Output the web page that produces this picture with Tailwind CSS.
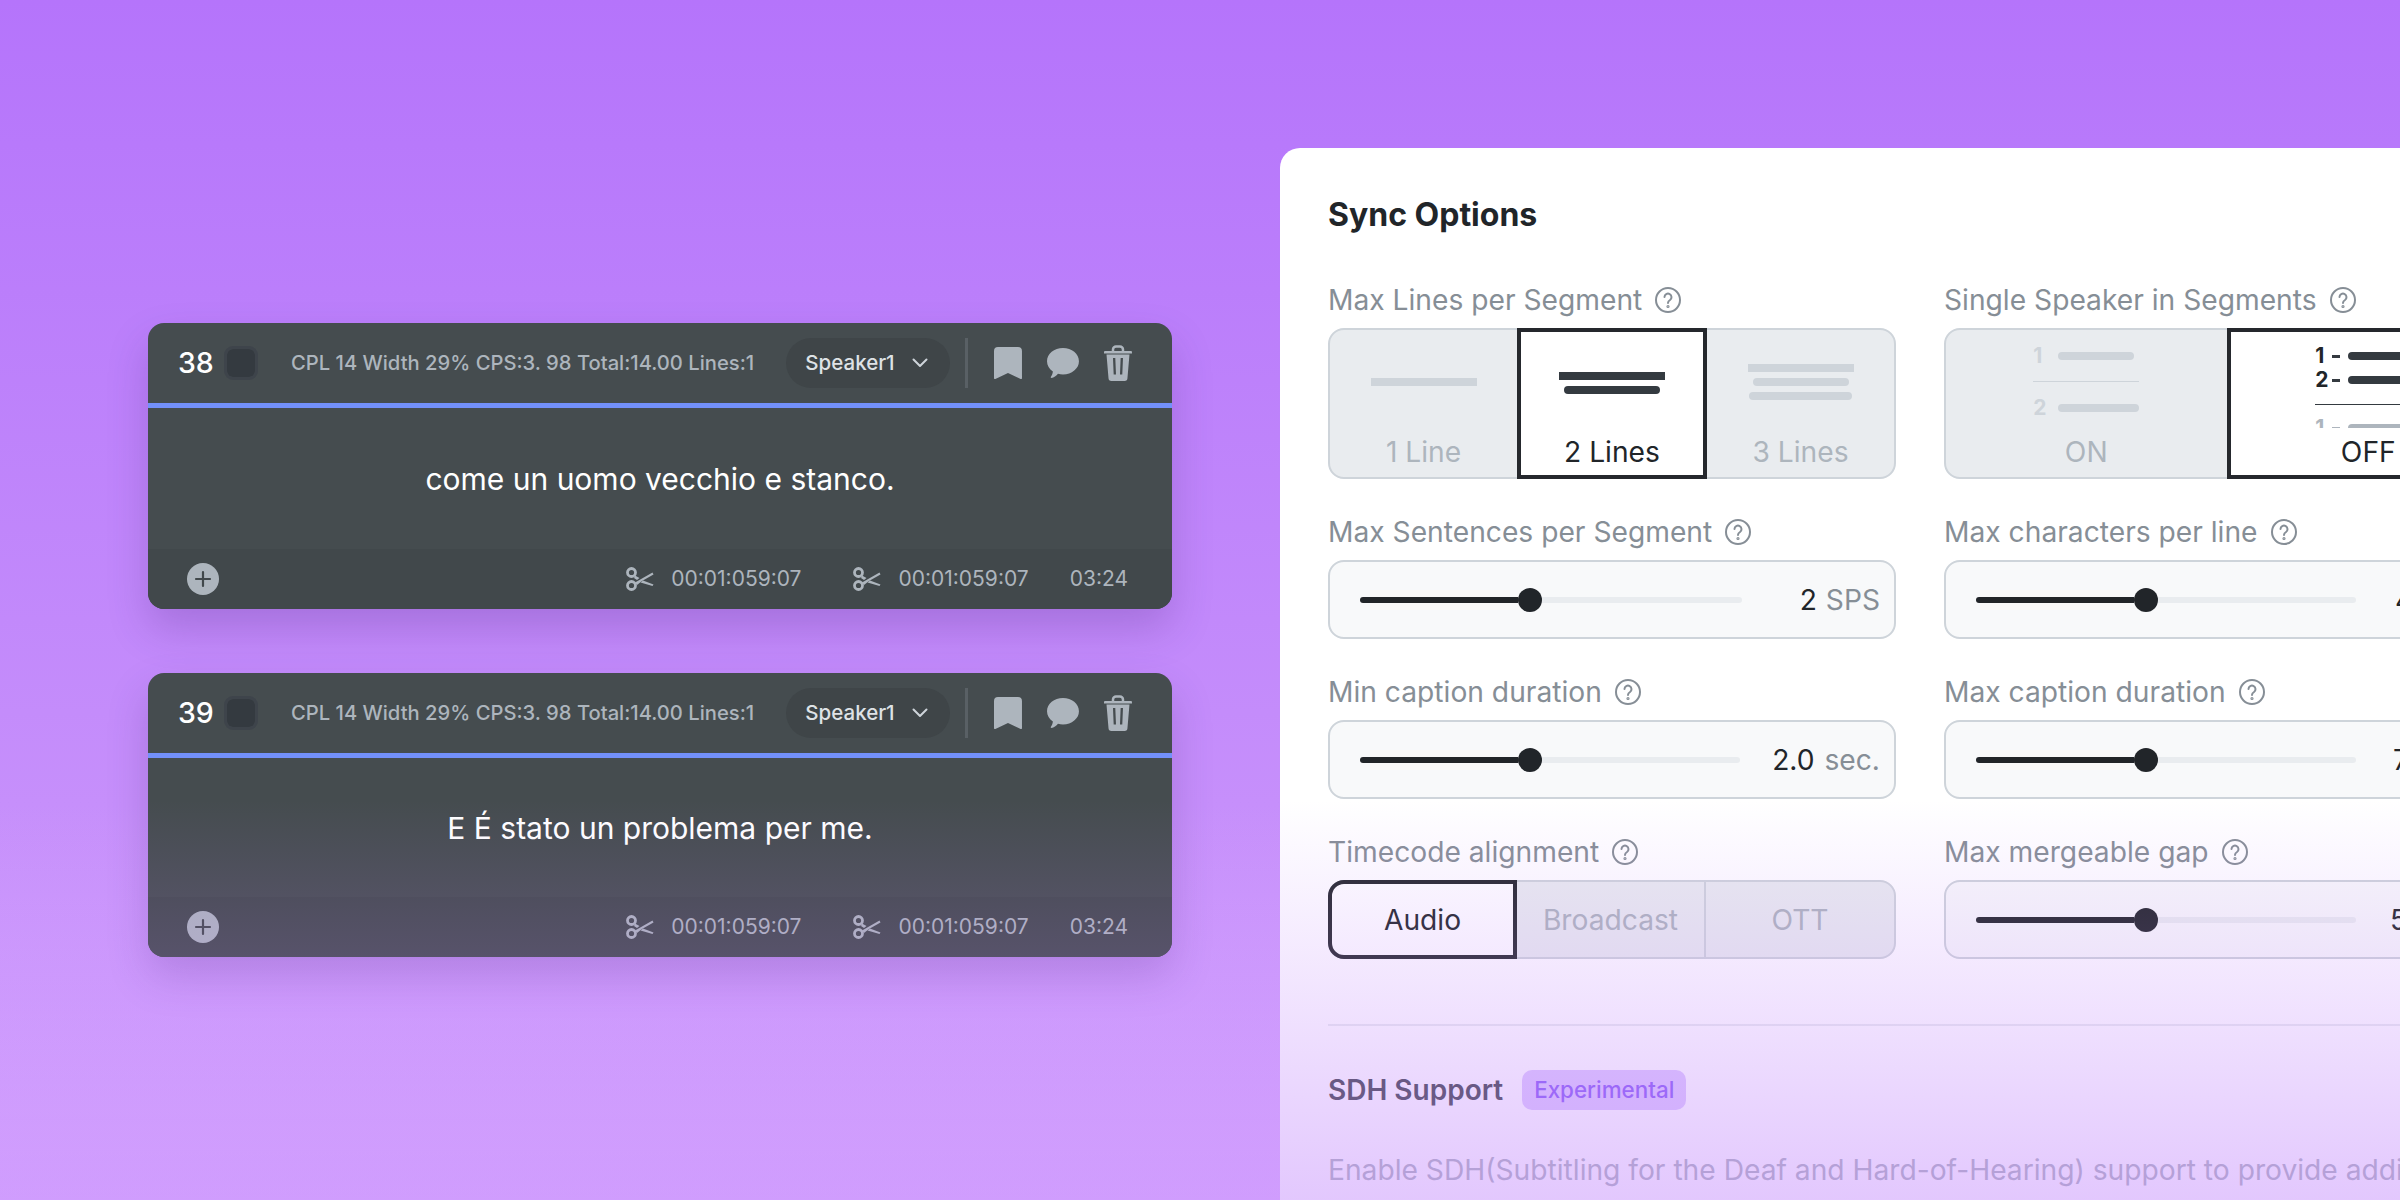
<!DOCTYPE html>
<html>
<head>
<meta charset="utf-8">
<script src="https://cdn.jsdelivr.net/npm/@tailwindcss/browser@4"></script>
</head>
<body class="m-0">
<div class="relative flex w-[2400px] h-[1200px] overflow-hidden bg-linear-to-b from-[#b574fb] via-[#c68ffb] via-67% to-[#ddb1ff] font-['Inter','Noto_Sans',sans-serif]">

  <!-- left column -->
  <div class="ml-[148px] mt-[323px] w-[1024px] shrink-0 flex flex-col gap-[64px]">
    <!-- card 38 -->
    <div class="w-[1024px] rounded-2xl overflow-hidden bg-[#454c4f] shadow-[0_20px_40px_rgba(70,30,120,0.22)]">
      <div class="h-[80px] flex items-center pl-[30px] pr-[40px]">
        <span class="w-[34px] text-[28.5px] leading-[36px] font-medium text-white">38</span>
        <span class="ml-[15px] w-[28px] h-[28px] rounded-md bg-[#343a40] outline-[3px] outline-[#3e444b]"></span>
        <span class="ml-[36px] w-[472px] whitespace-nowrap text-[20.2px] leading-[28px] font-medium text-[#adb5bd]">CPL 14 Width 29% CPS:3. 98 Total:14.00 Lines:1</span>
        <span class="ml-[24px] w-[164px] h-[50px] rounded-full bg-[#3f4548] flex items-center pl-[19px]">
          <span class="text-[20.5px] font-medium leading-[28px] text-[#dee2e6]">Speaker1</span>
          <svg class="ml-[17px]" width="16" height="10" viewBox="0 0 16 10" fill="none" stroke="#ced4da" stroke-width="2" stroke-linecap="round" stroke-linejoin="round"><path d="M1.5 1.5 8 8l6.5-6.5"/></svg>
        </span>
        <span class="ml-[15px] w-[3px] h-[50px] bg-[#596065]"></span>
        <svg class="ml-[26px]" width="28" height="32" viewBox="0 0 28 32" fill="#adb5bd"><path d="M4 0h20a4 4 0 0 1 4 4v27a1 1 0 0 1-1.400.900L14 26 1.400 31.900A1 1 0 0 1 0 31V4a4 4 0 0 1 4-4z"/></svg>
        <svg class="ml-[25px]" width="32" height="30" viewBox="0 0 32 30" fill="#adb5bd"><path d="M16 0c8.800 0 16 5.900 16 13.200S24.800 26.400 16 26.400c-1.800 0-3.500-.200-5-.7-1.600 1.900-4.200 4-6.500 4.200-.7 0-1-.6-.6-1.200.9-1.300 1.800-3.100 2-5.300C2.300 21 0 17.300 0 13.200 0 5.900 7.200 0 16 0z"/></svg>
        <svg class="ml-[25px]" width="28" height="36" viewBox="0 0 28 36" fill="none"><path d="M9 6V4.500A3 3 0 0 1 12 1.500h4a3 3 0 0 1 3 3V6" stroke="#adb5bd" stroke-width="2.500"/><path d="M1 6h26a1 1 0 0 1 1 1v1.500H0V7a1 1 0 0 1 1-1z" fill="#adb5bd"/><path fill-rule="evenodd" d="M2.500 9.500h23l-2 23.500a3 3 0 0 1-3 3h-13a3 3 0 0 1-3-3zM9 13l.7 16.500h2.300L11.300 13zm7.700 0L16 29.500h2.300L19 13z" fill="#adb5bd"/></svg>
      </div>
      <div class="h-[5px] bg-[#7390fa]"></div>
      <div class="h-[141px] flex items-center justify-center text-[30px] leading-[40px] text-white">come un uomo vecchio e stanco.</div>
      <div class="h-[60px] bg-[#41484b] flex items-center pl-[39px] pr-[44px]">
        <span class="w-[32px] h-[32px] rounded-full bg-[#adb5bd] flex items-center justify-center">
          <svg width="18" height="18" viewBox="0 0 18 18" stroke="#41484b" stroke-width="2.200" stroke-linecap="round"><path d="M9 2v14M2 9h14"/></svg>
        </span>
        <svg class="ml-auto" width="28" height="24" viewBox="0 0 28 24" fill="#adb5bd"><circle cx="5.500" cy="5.500" r="4" fill="none" stroke="#adb5bd" stroke-width="2.800"/><circle cx="5.500" cy="18.500" r="4" fill="none" stroke="#adb5bd" stroke-width="2.800"/><path d="M9 15.500 26.500 5.500l1 2L16 14l-5 4z"/><path d="M9 8.500 13.500 11 11 13 8 11zM17 13.500l10.500 4-1 1.500-12-3.500z"/></svg>
        <span class="ml-[17px] text-[21px] leading-[28px] text-[#adb5bd]">00:01:059:07</span>
        <svg class="ml-[52px]" width="28" height="24" viewBox="0 0 28 24" fill="#adb5bd"><circle cx="5.500" cy="5.500" r="4" fill="none" stroke="#adb5bd" stroke-width="2.800"/><circle cx="5.500" cy="18.500" r="4" fill="none" stroke="#adb5bd" stroke-width="2.800"/><path d="M9 15.500 26.500 5.500l1 2L16 14l-5 4z"/><path d="M9 8.500 13.500 11 11 13 8 11zM17 13.500l10.500 4-1 1.500-12-3.500z"/></svg>
        <span class="ml-[17px] text-[21px] leading-[28px] text-[#adb5bd]">00:01:059:07</span>
        <span class="ml-[41px] text-[21px] leading-[28px] text-[#adb5bd]">03:24</span>
      </div>
    </div>
    <!-- card 39 -->
    <div class="w-[1024px] rounded-2xl overflow-hidden bg-[#454c4f] shadow-[0_20px_40px_rgba(70,30,120,0.22)]">
      <div class="h-[80px] flex items-center pl-[30px] pr-[40px]">
        <span class="w-[34px] text-[28.5px] leading-[36px] font-medium text-white">39</span>
        <span class="ml-[15px] w-[28px] h-[28px] rounded-md bg-[#343a40] outline-[3px] outline-[#3e444b]"></span>
        <span class="ml-[36px] w-[472px] whitespace-nowrap text-[20.2px] leading-[28px] font-medium text-[#adb5bd]">CPL 14 Width 29% CPS:3. 98 Total:14.00 Lines:1</span>
        <span class="ml-[24px] w-[164px] h-[50px] rounded-full bg-[#3f4548] flex items-center pl-[19px]">
          <span class="text-[20.5px] font-medium leading-[28px] text-[#dee2e6]">Speaker1</span>
          <svg class="ml-[17px]" width="16" height="10" viewBox="0 0 16 10" fill="none" stroke="#ced4da" stroke-width="2" stroke-linecap="round" stroke-linejoin="round"><path d="M1.500 1.500 8 8l6.500-6.500"/></svg>
        </span>
        <span class="ml-[15px] w-[3px] h-[50px] bg-[#596065]"></span>
        <svg class="ml-[26px]" width="28" height="32" viewBox="0 0 28 32" fill="#adb5bd"><path d="M4 0h20a4 4 0 0 1 4 4v27a1 1 0 0 1-1.400.900L14 26 1.400 31.900A1 1 0 0 1 0 31V4a4 4 0 0 1 4-4z"/></svg>
        <svg class="ml-[25px]" width="32" height="30" viewBox="0 0 32 30" fill="#adb5bd"><path d="M16 0c8.800 0 16 5.900 16 13.200S24.800 26.400 16 26.400c-1.800 0-3.500-.200-5-.7-1.600 1.900-4.200 4-6.500 4.200-.7 0-1-.6-.6-1.200.9-1.300 1.800-3.100 2-5.300C2.300 21 0 17.300 0 13.200 0 5.900 7.200 0 16 0z"/></svg>
        <svg class="ml-[25px]" width="28" height="36" viewBox="0 0 28 36" fill="none"><path d="M9 6V4.500A3 3 0 0 1 12 1.500h4a3 3 0 0 1 3 3V6" stroke="#adb5bd" stroke-width="2.500"/><path d="M1 6h26a1 1 0 0 1 1 1v1.500H0V7a1 1 0 0 1 1-1z" fill="#adb5bd"/><path fill-rule="evenodd" d="M2.500 9.500h23l-2 23.500a3 3 0 0 1-3 3h-13a3 3 0 0 1-3-3zM9 13l.7 16.500h2.300L11.300 13zm7.700 0L16 29.500h2.300L19 13z" fill="#adb5bd"/></svg>
      </div>
      <div class="h-[5px] bg-[#7390fa]"></div>
      <div class="h-[139px] flex items-center justify-center text-[30px] leading-[40px] text-white">E É stato un problema per me.</div>
      <div class="h-[60px] bg-[#41484b] flex items-center pl-[39px] pr-[44px]">
        <span class="w-[32px] h-[32px] rounded-full bg-[#adb5bd] flex items-center justify-center">
          <svg width="18" height="18" viewBox="0 0 18 18" stroke="#41484b" stroke-width="2.200" stroke-linecap="round"><path d="M9 2v14M2 9h14"/></svg>
        </span>
        <svg class="ml-auto" width="28" height="24" viewBox="0 0 28 24" fill="#adb5bd"><circle cx="5.500" cy="5.500" r="4" fill="none" stroke="#adb5bd" stroke-width="2.800"/><circle cx="5.500" cy="18.500" r="4" fill="none" stroke="#adb5bd" stroke-width="2.800"/><path d="M9 15.500 26.500 5.500l1 2L16 14l-5 4z"/><path d="M9 8.500 13.500 11 11 13 8 11zM17 13.500l10.500 4-1 1.500-12-3.500z"/></svg>
        <span class="ml-[17px] text-[21px] leading-[28px] text-[#adb5bd]">00:01:059:07</span>
        <svg class="ml-[52px]" width="28" height="24" viewBox="0 0 28 24" fill="#adb5bd"><circle cx="5.500" cy="5.500" r="4" fill="none" stroke="#adb5bd" stroke-width="2.800"/><circle cx="5.500" cy="18.500" r="4" fill="none" stroke="#adb5bd" stroke-width="2.800"/><path d="M9 15.500 26.500 5.500l1 2L16 14l-5 4z"/><path d="M9 8.500 13.500 11 11 13 8 11zM17 13.500l10.500 4-1 1.500-12-3.500z"/></svg>
        <span class="ml-[17px] text-[21px] leading-[28px] text-[#adb5bd]">00:01:059:07</span>
        <span class="ml-[41px] text-[21px] leading-[28px] text-[#adb5bd]">03:24</span>
      </div>
    </div>
  </div>

  <!-- right panel -->
  <div class="ml-[108px] mt-[148px] w-[1300px] shrink-0 h-[1300px] rounded-t-[20px] bg-white pl-[48px] pt-[49px]">
    <h2 class="text-[32px] leading-[36px] font-bold text-[#212529]">Sync Options</h2>
    <div class="mt-[49px] grid grid-cols-[568px_568px] gap-x-[48px] gap-y-[35px]">

      <div>
        <div class="h-[36px] flex items-center gap-[13px] text-[28.2px] text-[#868e96]">Max Lines per Segment
          <svg width="26" height="26" viewBox="0 0 26 26" fill="none" stroke="#868e96" stroke-width="2"><circle cx="13" cy="13" r="12"/><path d="M9.500 10a3.500 3.500 0 1 1 5.500 3c-1.300.8-2 1.500-2 3" stroke-linecap="round"/><circle cx="13" cy="19.500" r=".6"/></svg>
        </div>
        <div class="mt-[10px] h-[151px] rounded-2xl border-2 border-[#ced4da] bg-[#e9ecef] flex">
          <div class="w-[187px] flex flex-col items-center">
            <div class="h-[104px] flex flex-col justify-center items-center"><div class="w-[106px] h-[8px] bg-[#ced4da]"></div></div>
            <div class="text-[28.2px] leading-[36px] text-[#adb5bd]">1 Line</div>
          </div>
          <div class="w-[190px] -my-[2px] border-[4px] border-[#25282d] bg-white flex flex-col items-center">
            <div class="h-[102px] flex flex-col justify-center items-center gap-[6px]"><div class="w-[106px] h-[8px] bg-[#343a40]"></div><div class="w-[96px] h-[8px] rounded-sm bg-[#343a40]"></div></div>
            <div class="text-[28.2px] leading-[36px] text-[#212529]">2 Lines</div>
          </div>
          <div class="flex-1 flex flex-col items-center">
            <div class="h-[104px] flex flex-col justify-center items-center gap-[6px]"><div class="w-[106px] h-[8px] bg-[#ced4da]"></div><div class="w-[96px] h-[8px] rounded-sm bg-[#ced4da]"></div><div class="w-[103px] h-[8px] rounded-sm bg-[#ced4da]"></div></div>
            <div class="text-[28.2px] leading-[36px] text-[#adb5bd]">3 Lines</div>
          </div>
        </div>
      </div>

      <div>
        <div class="h-[36px] flex items-center gap-[13px] text-[28.2px] text-[#868e96]">Single Speaker in Segments
          <svg width="26" height="26" viewBox="0 0 26 26" fill="none" stroke="#868e96" stroke-width="2"><circle cx="13" cy="13" r="12"/><path d="M9.500 10a3.500 3.500 0 1 1 5.500 3c-1.300.8-2 1.500-2 3" stroke-linecap="round"/><circle cx="13" cy="19.500" r=".6"/></svg>
        </div>
        <div class="mt-[10px] h-[151px] rounded-2xl border-2 border-[#ced4da] bg-[#e9ecef] flex">
          <div class="w-[281px] flex flex-col items-center">
            <div class="h-[104px] w-[106px] flex flex-col pt-[14px]">
              <div class="h-[24px] flex items-center gap-[8px]"><span class="w-[17px] text-[21px] leading-[24px] font-bold text-[#ced4da]">1</span><span class="w-[76px] h-[8px] rounded-sm bg-[#ced4da]"></span></div>
              <div class="mt-[13px] h-[1px] bg-[#ced4da]"></div>
              <div class="mt-[14px] h-[24px] flex items-center gap-[8px]"><span class="w-[17px] text-[21px] leading-[24px] font-bold text-[#ced4da]">2</span><span class="w-[81px] h-[8px] rounded-sm bg-[#ced4da]"></span></div>
            </div>
            <div class="text-[28.2px] leading-[36px] text-[#adb5bd]">ON</div>
          </div>
          <div class="w-[284px] -my-[2px] border-[4px] border-[#25282d] bg-white flex flex-col items-center">
            <div class="h-[96px] w-[106px] overflow-hidden pt-[12px] shrink-0">
              <div class="h-[24px] flex items-center"><span class="w-[17px] text-[21px] leading-[24px] font-bold text-[#212529]">1</span><span class="w-[8px] h-[3px] bg-[#343a40]"></span><span class="ml-[8px] w-[76px] h-[8px] rounded-sm bg-[#343a40]"></span></div>
              <div class="h-[24px] flex items-center"><span class="w-[17px] text-[21px] leading-[24px] font-bold text-[#212529]">2</span><span class="w-[8px] h-[3px] bg-[#343a40]"></span><span class="ml-[8px] w-[76px] h-[8px] rounded-sm bg-[#343a40]"></span></div>
              <div class="mt-[12px] h-[1px] bg-[#343a40]"></div>
              <div class="mt-[11px] h-[24px] flex items-center"><span class="w-[17px] text-[21px] leading-[24px] font-bold text-[#adb5bd]">1</span><span class="w-[8px] h-[3px] bg-[#adb5bd]"></span><span class="ml-[8px] w-[76px] h-[8px] rounded-sm bg-[#adb5bd]"></span></div>
            </div>
            <div class="mt-[6px] text-[28.2px] leading-[36px] text-[#212529]">OFF</div>
          </div>
        </div>
      </div>

      <div>
        <div class="h-[36px] flex items-center gap-[13px] text-[28.2px] text-[#868e96]">Max Sentences per Segment
          <svg width="26" height="26" viewBox="0 0 26 26" fill="none" stroke="#868e96" stroke-width="2"><circle cx="13" cy="13" r="12"/><path d="M9.500 10a3.500 3.500 0 1 1 5.500 3c-1.300.8-2 1.500-2 3" stroke-linecap="round"/><circle cx="13" cy="19.500" r=".6"/></svg>
        </div>
        <div class="mt-[10px] h-[79px] rounded-2xl border-2 border-[#ced4da] bg-[#f8f9fa] flex items-center pl-[30px] pr-[14px]">
          <div class="w-[382px] flex items-center"><div class="w-[158px] h-[6px] rounded-l-full bg-[#212529]"></div><div class="w-[24px] h-[24px] rounded-full bg-[#212529]"></div><div class="flex-1 h-[6px] rounded-r-full bg-[#e9ecef]"></div></div>
          <div class="ml-auto text-[28.2px] leading-[36px] whitespace-nowrap text-[#212529]">2 <span class="ml-[1px] text-[#868e96]">SPS</span></div>
        </div>
      </div>

      <div>
        <div class="h-[36px] flex items-center gap-[13px] text-[28.2px] text-[#868e96]">Max characters per line
          <svg width="26" height="26" viewBox="0 0 26 26" fill="none" stroke="#868e96" stroke-width="2"><circle cx="13" cy="13" r="12"/><path d="M9.500 10a3.500 3.500 0 1 1 5.500 3c-1.300.8-2 1.500-2 3" stroke-linecap="round"/><circle cx="13" cy="19.500" r=".6"/></svg>
        </div>
        <div class="mt-[10px] h-[79px] rounded-2xl border-2 border-[#ced4da] bg-[#f8f9fa] flex items-center pl-[30px]">
          <div class="w-[380px] flex items-center"><div class="w-[158px] h-[6px] rounded-l-full bg-[#212529]"></div><div class="w-[24px] h-[24px] rounded-full bg-[#212529]"></div><div class="flex-1 h-[6px] rounded-r-full bg-[#e9ecef]"></div></div>
          <div class="ml-[39px] text-[28.2px] leading-[36px] whitespace-nowrap text-[#212529]">42 <span class="text-[#868e96]">CPL</span></div>
        </div>
      </div>

      <div>
        <div class="h-[36px] flex items-center gap-[13px] text-[28.2px] text-[#868e96]">Min caption duration
          <svg width="26" height="26" viewBox="0 0 26 26" fill="none" stroke="#868e96" stroke-width="2"><circle cx="13" cy="13" r="12"/><path d="M9.500 10a3.500 3.500 0 1 1 5.500 3c-1.300.8-2 1.500-2 3" stroke-linecap="round"/><circle cx="13" cy="19.500" r=".6"/></svg>
        </div>
        <div class="mt-[10px] h-[79px] rounded-2xl border-2 border-[#ced4da] bg-[#f8f9fa] flex items-center pl-[30px] pr-[14px]">
          <div class="w-[380px] flex items-center"><div class="w-[158px] h-[6px] rounded-l-full bg-[#212529]"></div><div class="w-[24px] h-[24px] rounded-full bg-[#212529]"></div><div class="flex-1 h-[6px] rounded-r-full bg-[#e9ecef]"></div></div>
          <div class="ml-auto text-[28.2px] leading-[36px] whitespace-nowrap text-[#212529]">2.0 <span class="ml-[2px] text-[#868e96]">sec.</span></div>
        </div>
      </div>

      <div>
        <div class="h-[36px] flex items-center gap-[13px] text-[28.2px] text-[#868e96]">Max caption duration
          <svg width="26" height="26" viewBox="0 0 26 26" fill="none" stroke="#868e96" stroke-width="2"><circle cx="13" cy="13" r="12"/><path d="M9.500 10a3.500 3.500 0 1 1 5.500 3c-1.300.8-2 1.500-2 3" stroke-linecap="round"/><circle cx="13" cy="19.500" r=".6"/></svg>
        </div>
        <div class="mt-[10px] h-[79px] rounded-2xl border-2 border-[#ced4da] bg-[#f8f9fa] flex items-center pl-[30px]">
          <div class="w-[380px] flex items-center"><div class="w-[158px] h-[6px] rounded-l-full bg-[#212529]"></div><div class="w-[24px] h-[24px] rounded-full bg-[#212529]"></div><div class="flex-1 h-[6px] rounded-r-full bg-[#e9ecef]"></div></div>
          <div class="ml-[37px] text-[28.2px] leading-[36px] whitespace-nowrap text-[#212529]">7.0 <span class="ml-[2px] text-[#868e96]">sec.</span></div>
        </div>
      </div>

      <div>
        <div class="h-[36px] flex items-center gap-[13px] text-[28.2px] text-[#868e96]">Timecode alignment
          <svg width="26" height="26" viewBox="0 0 26 26" fill="none" stroke="#868e96" stroke-width="2"><circle cx="13" cy="13" r="12"/><path d="M9.500 10a3.500 3.500 0 1 1 5.500 3c-1.300.8-2 1.500-2 3" stroke-linecap="round"/><circle cx="13" cy="19.500" r=".6"/></svg>
        </div>
        <div class="mt-[10px] h-[79px] rounded-2xl border-2 border-[#ced4da] bg-[#e9ecef] flex text-[28.2px]">
          <div class="w-[189px] -my-[2px] -ml-[2px] pt-[2px] rounded-l-2xl border-[4px] border-[#25282d] bg-white flex items-center justify-center text-[#212529]">Audio</div>
          <div class="w-[189px] pt-[2px] border-r-2 border-[#ced4da] flex items-center justify-center text-[#adb5bd]">Broadcast</div>
          <div class="flex-1 pt-[2px] flex items-center justify-center text-[#adb5bd]">OTT</div>
        </div>
      </div>

      <div>
        <div class="h-[36px] flex items-center gap-[13px] text-[28.2px] text-[#868e96]">Max mergeable gap
          <svg width="26" height="26" viewBox="0 0 26 26" fill="none" stroke="#868e96" stroke-width="2"><circle cx="13" cy="13" r="12"/><path d="M9.500 10a3.500 3.500 0 1 1 5.500 3c-1.300.8-2 1.500-2 3" stroke-linecap="round"/><circle cx="13" cy="19.500" r=".6"/></svg>
        </div>
        <div class="mt-[10px] h-[79px] rounded-2xl border-2 border-[#ced4da] bg-[#f8f9fa] flex items-center pl-[30px]">
          <div class="w-[380px] flex items-center"><div class="w-[158px] h-[6px] rounded-l-full bg-[#212529]"></div><div class="w-[24px] h-[24px] rounded-full bg-[#212529]"></div><div class="flex-1 h-[6px] rounded-r-full bg-[#e9ecef]"></div></div>
          <div class="ml-[34px] text-[28.2px] leading-[36px] whitespace-nowrap text-[#212529]">5.0 <span class="ml-[2px] text-[#868e96]">sec.</span></div>
        </div>
      </div>
    </div>

    <div class="mt-[65px] h-[2px] bg-[#e9ecef]"></div>
    <div class="mt-[44px] flex items-center">
      <span class="text-[28px] leading-[36px] font-semibold text-[#3f454b]">SDH Support</span>
      <span class="ml-[19px] w-[164px] h-[40px] rounded-[10px] bg-[#ddc9fe] flex items-center justify-center text-[22.4px] font-medium text-[#8b5cf6]">Experimental</span>
    </div>
    <p class="mt-[42px] text-[28.2px] leading-[36px] whitespace-nowrap text-[#adb5bd]">Enable SDH(Subtitling for the Deaf and Hard-of-Hearing) support to provide additional audio information for viewers.</p>
  </div>

  <!-- fade over everything at the bottom -->
  <div class="absolute inset-x-0 bottom-0 h-[400px] pointer-events-none bg-linear-to-b from-[#c084fc]/0 to-[#c084fc]/45"></div>
</div>
</body>
</html>
